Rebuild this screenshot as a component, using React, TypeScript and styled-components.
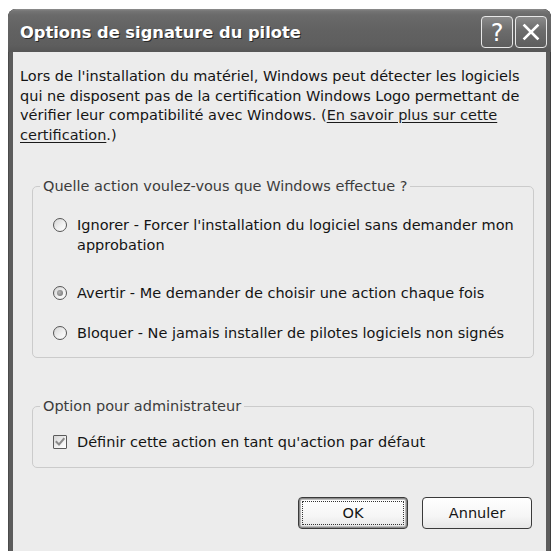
import React from "react";
import styled, { createGlobalStyle, css } from "styled-components";

const GlobalStyle = createGlobalStyle`
  html, body {
    margin: 0;
    padding: 0;
    background: #ffffff;
    overflow: hidden;
  }
  body {
    font-family: "DejaVu Sans", "Liberation Sans", sans-serif;
  }
`;

const Page = styled.div`
  padding: 9px 3px 0 8px;
  height: 551px;
  box-sizing: border-box;
`;

const Window = styled.div`
  width: 543px;
  height: 542px;
  display: flex;
  flex-direction: column;
  background: #5c5c5c;
  border-radius: 8px 8px 0 0;
  box-shadow: inset 1px 0 0 #4a4a4a, inset -1px 0 0 #3e3e3e;
  overflow: hidden;
`;

const TitleBar = styled.div`
  height: 43px;
  flex: none;
  box-sizing: border-box;
  display: flex;
  align-items: center;
  padding: 3px 4px 0 12px;
  background: linear-gradient(
    to bottom,
    #8e8e8e 0px,
    #747474 2px,
    #6a6a6a 6px,
    #626262 20px,
    #5e5e5e 36px,
    #565656 43px
  );
  border-radius: 8px 8px 0 0;
`;

const Title = styled.div`
  flex: 1;
  color: #ffffff;
  font-family: "DejaVu Sans", sans-serif;
  font-weight: bold;
  font-size: 16.3px;
  text-shadow: 1px 1px 0 #2a2a2a;
  white-space: nowrap;
`;

const TitleButtons = styled.div`
  display: flex;
  gap: 2px;
`;

const TitleButton = styled.div`
  width: 32px;
  height: 32px;
  box-sizing: border-box;
  border: 1px solid #e8e8e8;
  border-radius: 4px;
  background: linear-gradient(to bottom, #8a8a8a 0%, #6c6c6c 45%, #5e5e5e 100%);
  display: flex;
  align-items: center;
  justify-content: center;
  color: #ffffff;
`;

const HelpGlyph = styled.span`
  font-family: "DejaVu Sans", sans-serif;
  font-size: 24px;
  line-height: 1;
  color: #ffffff;
  margin-top: 1px;
`;

const Body = styled.div`
  flex: 1;
  margin: 0 5px;
  background: #ececec;
  font-family: "DejaVu Sans", sans-serif;
  font-size: 14.5px;
  color: #141414;
  display: flex;
  flex-direction: column;
`;

const Intro = styled.p`
  margin: 0;
  padding: 15px 10px 0 7px;
  line-height: 19.5px;
  white-space: nowrap;
`;

const Link = styled.span`
  text-decoration: underline;
  text-underline-offset: 2px;
  color: #1a1a1a;
`;

const Group = styled.fieldset<{ $top: number }>`
  margin: ${(p) => p.$top}px 12px 0 19px;
  padding: 0;
  border: 1px solid #cbcbcb;
  border-radius: 5px;
  min-width: 0;
`;

const GroupLegend = styled.legend`
  margin-left: 7px;
  padding: 0 3px;
  line-height: 19.5px;
  color: #3c3c3c;
`;

const GroupContent = styled.div<{ $pt: number; $pb: number }>`
  padding: ${(p) => p.$pt}px 8px ${(p) => p.$pb}px 20px;
  display: flex;
  flex-direction: column;
`;

const OptionRow = styled.div<{ $mt?: number }>`
  display: flex;
  align-items: flex-start;
  gap: 10px;
  margin-top: ${(p) => p.$mt ?? 0}px;
  line-height: 20px;
  white-space: nowrap;
`;

const indicatorBase = css`
  flex: none;
  width: 14px;
  height: 14px;
  box-sizing: border-box;
  margin-top: 3px;
  border: 1px solid #4e4e4e;
  background: linear-gradient(135deg, #d4d4d4 0%, #f0f0f0 55%, #ffffff 100%);
  display: flex;
  align-items: center;
  justify-content: center;
`;

const Radio = styled.span<{ $checked?: boolean }>`
  ${indicatorBase};
  border-radius: 50%;
  border-color: #555555;
  &::after {
    content: "";
    display: ${(p) => (p.$checked ? "block" : "none")};
    width: 6px;
    height: 6px;
    border-radius: 50%;
    background: radial-gradient(circle at 40% 40%, #b4b4b4 0%, #8a8a8a 60%, #6e6e6e 100%);
  }
`;

const Checkbox = styled.span`
  ${indicatorBase};
  border-color: #5a5a5a;
  border-radius: 1px;
`;

const ButtonRow = styled.div`
  display: flex;
  justify-content: flex-end;
  gap: 14px;
  padding: 29px 14px 0 0;
`;

const Button = styled.button<{ $default?: boolean }>`
  position: relative;
  width: 110px;
  height: 32px;
  box-sizing: border-box;
  border: 1px solid #3a3a3a;
  border-radius: 4px;
  background: linear-gradient(to bottom, #ffffff 0%, #f6f6f6 60%, #e6e6e6 100%);
  font-family: "DejaVu Sans", sans-serif;
  font-size: 14.5px;
  color: #141414;
  padding: 0;
  ${(p) =>
    p.$default &&
    css`
      box-shadow: inset 0 0 0 1px #8c8c8c, inset 0 0 0 2px #bdbdbd;
      &::after {
        content: "";
        position: absolute;
        inset: 3px;
        border: 1px dotted #333333;
        border-radius: 1px;
      }
    `}
`;

const CheckSvg = () => (
  <svg width="10" height="10" viewBox="0 0 10 10">
    <path d="M1.5 5 L4 7.5 L8.7 2" fill="none" stroke="#8a8a8a" strokeWidth="2" strokeLinecap="square" />
  </svg>
);

const CloseSvg = () => (
  <svg width="18" height="18" viewBox="0 0 18 18">
    <path d="M2.5 2.5 L15.5 15.5 M15.5 2.5 L2.5 15.5" stroke="#ffffff" strokeWidth="2.6" strokeLinecap="square" />
  </svg>
);

export default function App() {
  return (
    <>
      <GlobalStyle />
      <Page>
        <Window>
          <TitleBar>
            <Title>Options de signature du pilote</Title>
            <TitleButtons>
              <TitleButton>
                <HelpGlyph>?</HelpGlyph>
              </TitleButton>
              <TitleButton>
                <CloseSvg />
              </TitleButton>
            </TitleButtons>
          </TitleBar>
          <Body>
            <Intro>
              Lors de l'installation du matériel, Windows peut détecter les logiciels
              <br />
              qui ne disposent pas de la certification Windows Logo permettant de
              <br />
              vérifier leur compatibilité avec Windows. (<Link>En savoir plus sur cette</Link>
              <br />
              <Link>certification</Link>.)
            </Intro>

            <Group $top={32}>
              <GroupLegend>Quelle action voulez-vous que Windows effectue ?</GroupLegend>
              <GroupContent $pt={18} $pb={14}>
                <OptionRow>
                  <Radio />
                  <span>
                    Ignorer - Forcer l'installation du logiciel sans demander mon
                    <br />
                    approbation
                  </span>
                </OptionRow>
                <OptionRow $mt={28}>
                  <Radio $checked />
                  <span>Avertir - Me demander de choisir une action chaque fois</span>
                </OptionRow>
                <OptionRow $mt={20}>
                  <Radio />
                  <span>Bloquer - Ne jamais installer de pilotes logiciels non signés</span>
                </OptionRow>
              </GroupContent>
            </Group>

            <Group $top={39}>
              <GroupLegend>Option pour administrateur</GroupLegend>
              <GroupContent $pt={16} $pb={15}>
                <OptionRow>
                  <Checkbox>
                    <CheckSvg />
                  </Checkbox>
                  <span>Définir cette action en tant qu'action par défaut</span>
                </OptionRow>
              </GroupContent>
            </Group>

            <ButtonRow>
              <Button $default>OK</Button>
              <Button>Annuler</Button>
            </ButtonRow>
          </Body>
        </Window>
      </Page>
    </>
  );
}
